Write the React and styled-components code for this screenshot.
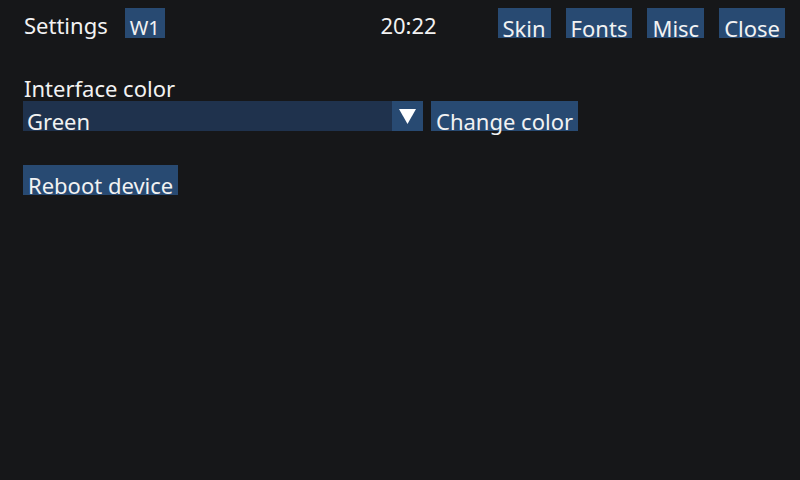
import React, { useState } from "react";
import styled, { createGlobalStyle } from "styled-components";

const GlobalStyle = createGlobalStyle`
  html, body {
    margin: 0;
    padding: 0;
    background: #161719;
  }
  body {
    width: 800px;
    height: 480px;
    overflow: hidden;
    font-family: "Noto Sans", "DejaVu Sans", sans-serif;
    color: #f2f2f2;
  }
`;

const Screen = styled.div`
  width: 800px;
  height: 480px;
  background: #161719;
  box-sizing: border-box;
`;

const TopBar = styled.div`
  display: grid;
  grid-template-columns: 1fr auto 1fr;
  align-items: start;
  padding: 8px 15px 0 24px;
  height: 30px;
`;

const Left = styled.div`
  display: flex;
  align-items: start;
  gap: 17px;
`;

const Right = styled.div`
  display: flex;
  justify-content: flex-end;
  gap: 15px;
`;

const Title = styled.span`
  font-size: 22px;
  line-height: 36px;
  margin-top: -1px;
`;

const Clock = styled.span`
  font-size: 22px;
  line-height: 36px;
  margin: -1px 0 0 8px;
`;

const Button = styled.button`
  height: 30px;
  box-sizing: border-box;
  margin: 0;
  border: none;
  border-radius: 0;
  padding: 5px 5px 0 5px;
  background: #284a72;
  color: #f2f2f2;
  font-family: inherit;
  font-size: ${(p) => (p.$small ? 20 : 22)}px;
  line-height: 30px;
  text-align: left;
  overflow: visible;
  white-space: nowrap;
  cursor: pointer;
`;

const Content = styled.div`
  padding: 41px 0 0 23px;
  display: flex;
  flex-direction: column;
`;

const Label = styled.div`
  font-size: 22px;
  line-height: 18px;
  margin-bottom: 4px;
  padding-left: 1px;
`;

const Row = styled.div`
  display: flex;
  gap: 8px;
`;

const Select = styled.div`
  width: 400px;
  height: 30px;
  display: flex;
  background: #1f324d;
`;

const SelectValue = styled.div`
  flex: 1;
  font-size: 22px;
  line-height: 30px;
  padding: 5px 0 0 4px;
  box-sizing: border-box;
  height: 30px;
  white-space: nowrap;
`;

const Arrow = styled.div`
  width: 31px;
  height: 30px;
  background: #284a72;
  display: flex;
  justify-content: center;
  padding-top: 8px;
  box-sizing: border-box;
`;

const Spacer = styled.div`
  height: ${(p) => p.$h}px;
`;

export default function App() {
  const [color] = useState("Green");
  return (
    <Screen>
      <GlobalStyle />
      <TopBar>
        <Left>
          <Title>Settings</Title>
          <Button $small>W1</Button>
        </Left>
        <Clock>20:22</Clock>
        <Right>
          <Button>Skin</Button>
          <Button>Fonts</Button>
          <Button>Misc</Button>
          <Button>Close</Button>
        </Right>
      </TopBar>
      <Content>
        <Label>Interface color</Label>
        <Row>
          <Select>
            <SelectValue>{color}</SelectValue>
            <Arrow>
              <svg width="17" height="15" viewBox="0 0 17 15">
                <polygon points="0,0 17,0 8.5,15" fill="#ffffff" />
              </svg>
            </Arrow>
          </Select>
          <Button>Change color</Button>
        </Row>
        <Spacer $h={34} />
        <div>
          <Button>Reboot device</Button>
        </div>
      </Content>
    </Screen>
  );
}
